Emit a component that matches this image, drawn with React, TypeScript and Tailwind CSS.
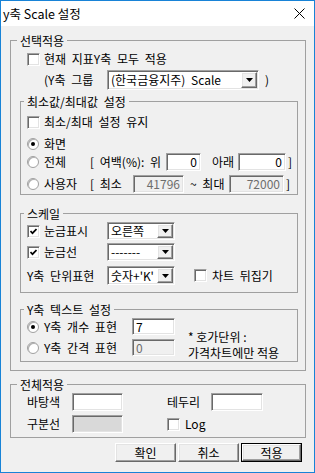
import React from 'react'

const sunken =
  'border border-t-[#a0a0a0] border-l-[#a0a0a0] border-b-white border-r-white shadow-[inset_1px_1px_0_#696969,inset_-1px_-1px_0_#e3e3e3]'
const raised =
  'border border-t-white border-l-white border-b-[#696969] border-r-[#696969] shadow-[inset_-1px_-1px_0_#a0a0a0,inset_1px_1px_0_#e3e3e3]'

function Check({ on }: { on?: boolean }) {
  return (
    <span className={`flex h-[13px] w-[13px] shrink-0 items-center justify-center bg-white ${sunken}`}>
      {on && (
        <svg width="7" height="7" viewBox="0 0 7 7">
          <polyline points="0.5,3 2.5,5.2 6.5,1" fill="none" stroke="#000" strokeWidth="1.7" />
        </svg>
      )}
    </span>
  )
}

function Radio({ on }: { on?: boolean }) {
  return (
    <span className="flex h-[12px] w-[12px] shrink-0 items-center justify-center rounded-full border border-[#a0a0a0] bg-white shadow-[inset_1px_1px_0_#b0b0b0]">
      {on && <span className="h-[4px] w-[4px] rounded-full bg-black" />}
    </span>
  )
}

function Combo({ value, className }: { value: string; className: string }) {
  return (
    <div className={`flex h-full bg-white p-[1px] ${sunken} ${className}`}>
      <span className="flex flex-1 items-center whitespace-nowrap pl-[2px]">{value}</span>
      <span className={`flex w-[16px] shrink-0 items-center justify-center bg-[#f0f0f0] ${raised}`}>
        <svg width="7" height="4" viewBox="0 0 7 4">
          <path d="M0 0h7L3.5 4z" fill="#000" />
        </svg>
      </span>
    </div>
  )
}

function Field({
  value,
  className,
  disabled,
  right,
}: {
  value?: string
  className: string
  disabled?: boolean
  right?: boolean
}) {
  return (
    <div
      className={`flex h-full items-center ${sunken} ${disabled ? 'bg-[#f0f0f0] text-[#6d6d6d]' : 'bg-white'} ${
        right ? 'justify-end pr-[3px]' : 'pl-[3px]'
      } ${className}`}
    >
      {value}
    </div>
  )
}

function Button({ label, primary }: { label: string; primary?: boolean }) {
  return (
    <div className={`h-[19px] w-[61px] ${primary ? 'border border-black' : ''}`}>
      <div className={`flex h-full items-center justify-center bg-[#f0f0f0] ${raised}`}>{label}</div>
    </div>
  )
}

export default function App() {
  return (
    <div className="flex h-[473px] w-[315px] flex-col border border-[#1883d7] bg-[#f0f0f0] font-['Noto_Sans_CJK_KR',sans-serif] text-[12px] leading-[14px] text-black [word-spacing:3px]">
      <div className="flex h-[25px] shrink-0 items-center justify-between bg-white pl-[2px] pr-[9px] [word-spacing:0px]">
        <span className="text-[12.5px]">y축 Scale 설정</span>
        <svg width="11" height="11" viewBox="0 0 11 11">
          <path d="M0.5 0.5l10 10M10.5 0.5l-10 10" stroke="#000" strokeWidth="1" />
        </svg>
      </div>

      <div className="flex flex-col pl-[9px]">
        <fieldset className="mt-[7px] w-[296px] border border-[#a0a0a0]">
          <legend className="ml-[6px] px-[3px] leading-[15px]">선택적용</legend>
          <div className="flex flex-col pb-[8px] pl-[9px] pr-[7px]">
            <div className="ml-[7px] mt-[3px] flex h-[16px] items-center gap-[4px]">
              <Check />
              <span>현재 지표Y축 모두 적용</span>
            </div>
            <div className="mt-[3px] flex h-[20px] items-center">
              <span className="ml-[24px] w-[63px]">(Y축 그룹</span>
              <Combo className="w-[152px]" value="(한국금융지주) Scale" />
              <span className="ml-[6px]">)</span>
            </div>

            <fieldset className="mt-[4px] w-[278px] border border-[#a0a0a0]">
              <legend className="ml-[3px] px-[3px] leading-[15px]">최소값/최대값 설정</legend>
              <div className="flex flex-col pb-[1px] pl-[6px]">
                <div className="mt-[5px] flex h-[16px] items-center gap-[4px]">
                  <Check />
                  <span>최소/최대 설정 유지</span>
                </div>
                <div className="mt-[6px] flex h-[16px] items-center gap-[5px]">
                  <Radio on />
                  <span>화면</span>
                </div>
                <div className="mt-[1px] flex h-[18px] items-center">
                  <span className="flex w-[63px] items-center gap-[5px]">
                    <Radio />
                    전체
                  </span>
                  <span className="w-[76px]">[ 여백(%): 위</span>
                  <Field className="w-[35px]" value="0" right />
                  <span className="w-[37px] pl-[11px]">아래</span>
                  <Field className="w-[48px]" value="0" right />
                  <span className="ml-[2px]">]</span>
                </div>
                <div className="mt-[4px] flex h-[18px] items-center">
                  <span className="flex w-[63px] items-center gap-[5px]">
                    <Radio />
                    사용자
                  </span>
                  <span className="w-[43px]">[ 최소</span>
                  <Field className="w-[51px]" value="41796" right disabled />
                  <span className="w-[45px] pl-[6px]">~ 최대</span>
                  <Field className="w-[55px]" value="72000" right disabled />
                  <span className="ml-[2px]">]</span>
                </div>
              </div>
            </fieldset>

            <fieldset className="mt-[11px] w-[278px] border border-[#a0a0a0]">
              <legend className="ml-[3px] px-[3px] leading-[15px]">스케일</legend>
              <div className="flex flex-col pb-[7px] pl-[6px]">
                <div className="mt-[1px] flex h-[18px] items-center">
                  <span className="flex w-[80px] items-center gap-[4px]">
                    <Check on />
                    눈금표시
                  </span>
                  <Combo className="w-[68px]" value="오른쪽" />
                </div>
                <div className="mt-[3px] flex h-[18px] items-center">
                  <span className="flex w-[80px] items-center gap-[4px]">
                    <Check on />
                    눈금선
                  </span>
                  <Combo className="w-[68px]" value="-------" />
                </div>
                <div className="mt-[5px] flex h-[19px] items-center">
                  <span className="w-[80px]">Y축 단위표현</span>
                  <Combo className="w-[68px]" value="숫자+'K'" />
                  <span className="ml-[19px] flex items-center gap-[5px]">
                    <Check />
                    차트 뒤집기
                  </span>
                </div>
              </div>
            </fieldset>

            <fieldset className="mt-[9px] w-[278px] border border-[#a0a0a0]">
              <legend className="ml-[3px] px-[3px] leading-[15px]">Y축 텍스트 설정</legend>
              <div className="flex pl-[6px]">
                <div className="flex flex-col">
                  <div className="mt-[1px] flex h-[17px] items-center">
                    <span className="flex w-[105px] items-center gap-[5px]">
                      <Radio on />
                      Y축 개수 표현
                    </span>
                    <Field className="w-[43px]" value="7" />
                  </div>
                  <div className="mt-[4px] flex h-[17px] items-center">
                    <span className="flex w-[105px] items-center gap-[5px]">
                      <Radio />
                      Y축 간격 표현
                    </span>
                    <Field className="w-[43px]" value="0" disabled />
                  </div>
                </div>
                <div className="ml-[13px] mt-[12px] flex flex-col leading-[16px] [word-spacing:0px]">
                  <span>* 호가단위 :</span>
                  <span>가격차트에만 적용</span>
                </div>
              </div>
            </fieldset>
          </div>
        </fieldset>

        <fieldset className="mt-[6px] w-[296px] border border-[#a0a0a0]">
          <legend className="ml-[6px] px-[3px] leading-[15px]">전체적용</legend>
          <div className="flex flex-col pb-[4px] pl-[16px]">
            <div className="mt-[1px] flex h-[18px] items-center">
              <span className="w-[45px]">바탕색</span>
              <Field className="w-[51px]" />
              <span className="ml-[44px] w-[44px]">테두리</span>
              <Field className="w-[52px]" />
            </div>
            <div className="mt-[4px] flex h-[18px] items-center">
              <span className="w-[45px]">구분선</span>
              <Field className="w-[51px] !bg-[#d9d9d9]" disabled />
              <span className="ml-[44px] flex items-center gap-[5px]">
                <Check />
                Log
              </span>
            </div>
          </div>
        </fieldset>

        <div className="mt-[5px] flex justify-end gap-[2px] pr-[12px]">
          <Button label="확인" />
          <Button label="취소" />
          <Button label="적용" primary />
        </div>
      </div>
    </div>
  )
}
